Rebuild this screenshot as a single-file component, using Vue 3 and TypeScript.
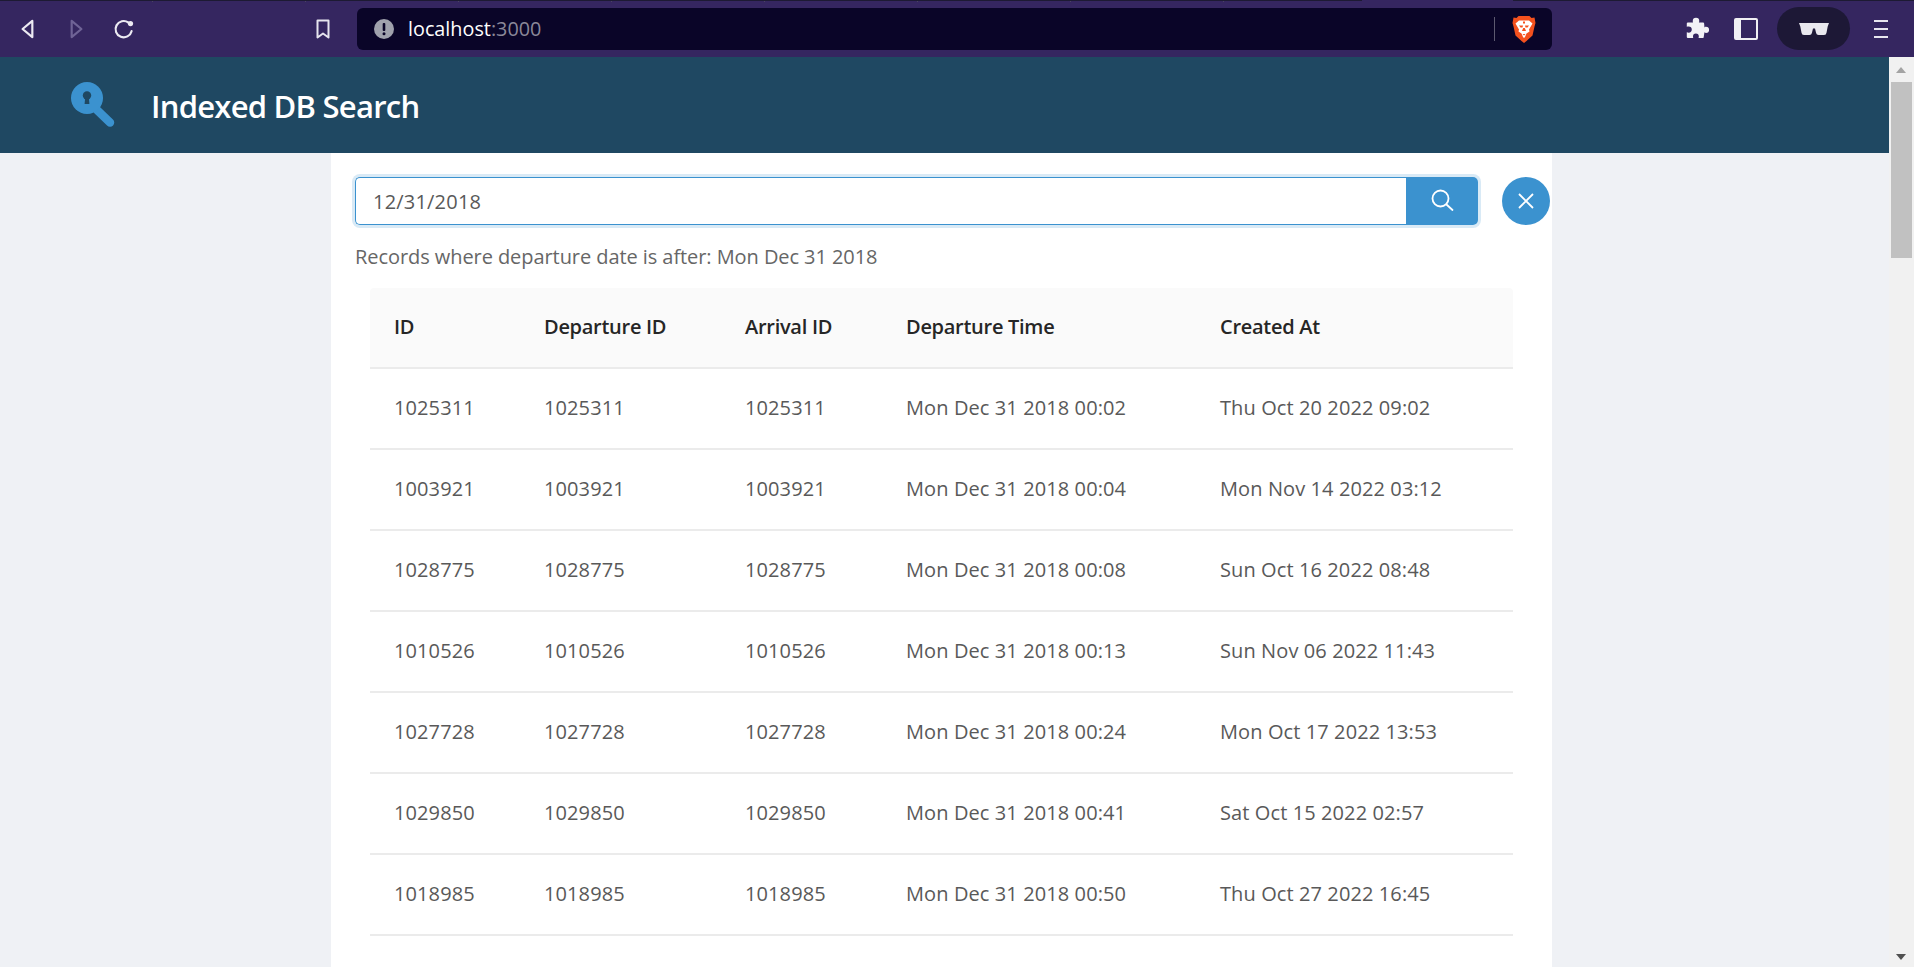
<script setup lang="ts">
interface FlightRow {
  id: string
  departure: string
  created: string
}

const rows: FlightRow[] = [
  { id: '1025311', departure: 'Mon Dec 31 2018 00:02', created: 'Thu Oct 20 2022 09:02' },
  { id: '1003921', departure: 'Mon Dec 31 2018 00:04', created: 'Mon Nov 14 2022 03:12' },
  { id: '1028775', departure: 'Mon Dec 31 2018 00:08', created: 'Sun Oct 16 2022 08:48' },
  { id: '1010526', departure: 'Mon Dec 31 2018 00:13', created: 'Sun Nov 06 2022 11:43' },
  { id: '1027728', departure: 'Mon Dec 31 2018 00:24', created: 'Mon Oct 17 2022 13:53' },
  { id: '1029850', departure: 'Mon Dec 31 2018 00:41', created: 'Sat Oct 15 2022 02:57' },
  { id: '1018985', departure: 'Mon Dec 31 2018 00:50', created: 'Thu Oct 27 2022 16:45' },
  { id: '1020704', departure: 'Mon Dec 31 2018 00:52', created: 'Thu Oct 27 2022 17:06' }
]
</script>

<template>
  <div class="window">
    <div class="toolbar">
      <div class="tab-line left"></div>
      <div class="tab-line right"></div>
      <div class="nav">
        <svg class="nav-icon" viewBox="0 0 24 24"><path d="M16 4.500 7 12l9 7.500z" fill="none" stroke="#eceaf2" stroke-width="2" stroke-linejoin="round" /></svg>
        <svg class="nav-icon dim" viewBox="0 0 24 24"><path d="M8 4.500 17 12l-9 7.500z" fill="none" stroke="#6f6396" stroke-width="2" stroke-linejoin="round" /></svg>
        <svg class="nav-icon" viewBox="0 0 24 24"><path d="M19 14a7.500 7.500 0 1 1-3-8" fill="none" stroke="#eceaf2" stroke-width="2" stroke-linecap="round" /><circle cx="18" cy="7" r="2.400" fill="#eceaf2" /></svg>
      </div>
      <svg class="bookmark" viewBox="0 0 24 24"><path d="M6.500 3.500h11v17L12 16.500l-5.500 4z" fill="none" stroke="#e6e4ee" stroke-width="2" stroke-linejoin="round" /></svg>
      <div class="urlbar">
        <svg class="info" viewBox="0 0 20 20"><circle cx="10" cy="10" r="10" fill="#a0a2ad" /><rect x="8.700" y="4" width="2.600" height="8" rx="1" fill="#0a0528" /><circle cx="10" cy="14.700" r="1.500" fill="#0a0528" /></svg>
        <span class="host">localhost<span class="port">:3000</span></span>
        <span class="url-sep"></span>
        <svg class="brave" viewBox="0 0 24 28">
          <path d="M6.500 1h11l2 2 3-.5L23.500 8l-1 3.500-2 9-6 5.500-2.500 2-2.500-2-6-5.500-2-9-1-3.500 1-5.500 3 .5z" fill="#f4511e" />
          <path d="M7 5.500h10l3.500 3-3.500 6 .5 2-3 2-1.500 3.500-1 1-1-1-1.500-3.500-3-2 .5-2-3.500-6z" fill="#fff" />
          <path d="M7 10.500h4l-.5 2H8.500zM13 10.500h4l-1.500 2h-2zM11 6.500h2v2h-2zM11.200 13h1.600l1.200 3h-4zM10.500 19h3L12 20.500z" fill="#f4511e" />
        </svg>
      </div>
      <div class="tools">
        <svg class="puzzle" viewBox="0 0 24 24"><path d="M9 4.500a3 3 0 0 1 6 0c0 .800-.3 1-.3 1.500h3.800a1 1 0 0 1 1 1l.3 3.500c.5-.4 1-.5 1.500-.5a2.800 2.800 0 0 1 0 5.600c-.6 0-1-.2-1.500-.5l-.7 4.400a1 1 0 0 1-1 .800h-3.800c.2-.6.300-1 .3-1.400a2.700 2.700 0 0 0-5.400 0c0 .4.100.8.300 1.400H4.500a1 1 0 0 1-1-1v-4.300c.8.300 1.200.4 1.700.4a2.900 2.900 0 0 0 0-5.800c-.5 0-.9.100-1.700.4V7a1 1 0 0 1 1-1h4.800c-.2-.5-.3-.8-.3-1.500z" fill="#f3f2f6" /></svg>
        <div class="sidebar-icon"></div>
        <div class="private">
          <svg viewBox="0 0 30 13"><path d="M0 1h30l-1.300 3.500-1.200 6.200A2.500 2.500 0 0 1 25 13h-5.500a2.500 2.500 0 0 1-2.400-2L16 6.500h-2L12.900 11a2.500 2.500 0 0 1-2.400 2H5a2.500 2.500 0 0 1-2.500-2.300L1.300 4.500z" fill="#e9e8ee" /></svg>
        </div>
        <div class="menu"><span></span><span></span><span></span></div>
      </div>
    </div>

    <div class="viewport">
      <div class="page">
        <header class="app-header">
          <svg class="logo" viewBox="0 0 46 46">
            <path d="M27 28 40 40.500" stroke="#3b92cf" stroke-width="8.500" stroke-linecap="round" />
            <circle cx="17" cy="16" r="16" fill="#3b92cf" />
            <circle cx="17" cy="13.500" r="4.200" fill="#1f4862" />
            <path d="M15.200 15h3.600l.6 7h-4.800z" fill="#1f4862" />
          </svg>
          <h1>Indexed DB Search</h1>
        </header>
        <main class="content">
          <div class="search-row">
            <div class="search">
              <div class="search-input">12/31/2018</div>
              <button class="search-btn" type="button">
                <svg viewBox="0 0 24 24"><circle cx="10.500" cy="10.500" r="8" fill="none" stroke="#fff" stroke-width="1.800" /><path d="m16.500 16.500 6 5.500" stroke="#fff" stroke-width="1.800" stroke-linecap="round" /></svg>
              </button>
            </div>
            <button class="clear-btn" type="button">
              <svg viewBox="0 0 16 16"><path d="m1 1 14 14M15 1 1 15" stroke="#fff" stroke-width="1.800" /></svg>
            </button>
          </div>
          <p class="summary">Records where departure date is after: Mon Dec 31 2018</p>
          <table class="records">
            <colgroup>
              <col class="c-id" />
              <col class="c-dep" />
              <col class="c-arr" />
              <col class="c-time" />
              <col class="c-created" />
            </colgroup>
            <thead>
              <tr>
                <th>ID</th>
                <th>Departure ID</th>
                <th>Arrival ID</th>
                <th>Departure Time</th>
                <th>Created At</th>
              </tr>
            </thead>
            <tbody>
              <tr v-for="row in rows" :key="row.id">
                <td>{{ row.id }}</td>
                <td>{{ row.id }}</td>
                <td>{{ row.id }}</td>
                <td>{{ row.departure }}</td>
                <td>{{ row.created }}</td>
              </tr>
            </tbody>
          </table>
        </main>
      </div>
      <div class="scrollbar">
        <span class="arrow up"></span>
        <div class="thumb"></div>
        <span class="arrow down"></span>
      </div>
    </div>
  </div>
</template>

<style scoped>
.window {
  width: 1914px;
  height: 967px;
  display: flex;
  flex-direction: column;
  overflow: hidden;
  font-family: "Open Sans", "Noto Sans", sans-serif;
}

.toolbar {
  position: relative;
  height: 57px;
  flex: none;
  display: flex;
  align-items: center;
  background: #352660;
}

.tab-line {
  position: absolute;
  top: 0;
  height: 1px;
  background: #1d1a33;
}

.tab-line.left {
  left: 0;
  width: 1362px;
  height: 2px;
  background:
    linear-gradient(#1d1a33 1px, transparent 1px),
    repeating-linear-gradient(90deg, transparent 0 152px, #4a4560 152px 153px);
}

.tab-line.right {
  left: 1513px;
  right: 0;
}

.nav {
  width: 311px;
  display: flex;
  align-items: center;
  gap: 22px;
  padding-left: 15px;
  box-sizing: border-box;
}

.nav-icon {
  width: 26px;
  height: 26px;
}

.bookmark {
  width: 24px;
  height: 24px;
  margin-right: 22px;
}

.urlbar {
  width: 1195px;
  height: 42px;
  display: flex;
  align-items: center;
  background: #0a0528;
  border-radius: 6px;
  padding: 0 16px 0 17px;
  box-sizing: border-box;
}

.info {
  width: 20px;
  height: 20px;
}

.host {
  margin-left: 14px;
  font-size: 19.800px;
  color: #fff;
}

.port {
  color: #8a8899;
}

.url-sep {
  width: 1px;
  height: 24px;
  margin-left: auto;
  margin-right: 17px;
  background: #5d5a70;
}

.brave {
  width: 24px;
  height: 28px;
}

.tools {
  flex: 1;
  display: flex;
  align-items: center;
  padding-left: 131px;
}

.puzzle {
  width: 26px;
  height: 26px;
}

.sidebar-icon {
  width: 24px;
  height: 22px;
  margin-left: 25px;
  box-sizing: border-box;
  border: 2px solid #f1f0f4;
  border-left-width: 7px;
  border-radius: 2px;
}

.private {
  width: 73px;
  height: 43px;
  margin-left: 19px;
  display: flex;
  align-items: center;
  justify-content: center;
  border-radius: 22px;
  background: #1d1836;
}

.private svg {
  width: 30px;
  height: 13px;
}

.menu {
  margin-left: 24px;
  display: flex;
  flex-direction: column;
  gap: 6px;
}

.menu span {
  display: block;
  width: 14px;
  height: 2px;
  background: #e8e6ef;
}

.viewport {
  flex: 1;
  min-height: 0;
  display: flex;
}

.page {
  flex: 1;
  min-width: 0;
  background: #eff1f5;
  overflow: hidden;
}

.app-header {
  height: 96px;
  display: flex;
  align-items: center;
  background: #1f4862;
  padding-left: 70px;
}

.logo {
  width: 46px;
  height: 46px;
}

h1 {
  margin: 1px 0 0 35px;
  font-size: 31px;
  font-weight: 600;
  letter-spacing: -0.75px;
  color: #fff;
}

.content {
  width: 1221px;
  height: 900px;
  margin-left: 331px;
  background: #fff;
  box-sizing: border-box;
  padding: 24px 3px 0 24px;
}

.search-row {
  display: flex;
  align-items: flex-start;
}

.search {
  width: 1123px;
  height: 48px;
  flex: none;
  display: flex;
  border-radius: 5px;
  box-shadow: 0 0 0 3px #d9eaf6;
}

.search-input {
  flex: 1;
  box-sizing: border-box;
  padding-left: 17px;
  display: flex;
  align-items: center;
  font-size: 20px;
  letter-spacing: 0.2px;
  color: #595959;
  border: 1px solid #3b92cf;
  border-right: 0;
  border-radius: 5px 0 0 5px;
}

.search-btn {
  width: 72px;
  border: 0;
  padding: 0 0 2px;
  display: flex;
  align-items: center;
  justify-content: center;
  background: #3b92cf;
  border-radius: 0 5px 5px 0;
}

.search-btn svg {
  width: 24px;
  height: 24px;
}

.clear-btn {
  width: 48px;
  height: 48px;
  flex: none;
  margin-left: 24px;
  border: 0;
  padding: 0;
  display: flex;
  align-items: center;
  justify-content: center;
  background: #3b92cf;
  border-radius: 50%;
}

.clear-btn svg {
  width: 16px;
  height: 16px;
}

.summary {
  margin: 21px 0 0;
  font-size: 20px;
  line-height: 22px;
  letter-spacing: -0.07px;
  color: #666;
}

.records {
  margin: 20px 0 0 15px;
  width: 1143px;
  table-layout: fixed;
  border-collapse: separate;
  border-spacing: 0;
  font-size: 20px;
  letter-spacing: 0.1px;
  color: #595959;
}

.c-id { width: 150px; }
.c-dep { width: 201px; }
.c-arr { width: 161px; }
.c-time { width: 314px; }
.c-created { width: 317px; }

th,
td {
  height: 81px;
  box-sizing: border-box;
  padding: 0 0 2px 24px;
  text-align: left;
  border-bottom: 2px solid #ebebeb;
}

th {
  font-weight: 600;
  letter-spacing: -0.28px;
  color: #262626;
  background: #fafafa;
}

th:first-child {
  border-top-left-radius: 4px;
}

th:last-child {
  border-top-right-radius: 4px;
}

.scrollbar {
  width: 25px;
  flex: none;
  position: relative;
  background: #f1f1f1;
}

.thumb {
  position: absolute;
  top: 25px;
  left: 2px;
  width: 21px;
  height: 176px;
  background: #c1c1c1;
}

.arrow {
  position: absolute;
  left: 7px;
  width: 0;
  height: 0;
  border-left: 5.500px solid transparent;
  border-right: 5.500px solid transparent;
}

.arrow.up {
  top: 10px;
  border-bottom: 6px solid #a3a3a3;
}

.arrow.down {
  bottom: 7px;
  border-top: 6px solid #505050;
}
</style>
